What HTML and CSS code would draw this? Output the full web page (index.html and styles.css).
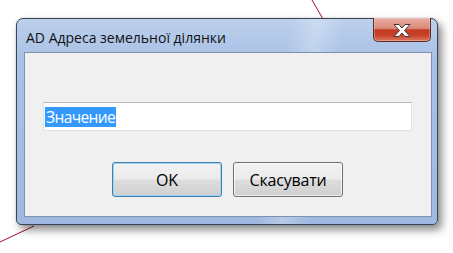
FILE: index.html
```html
<!DOCTYPE html>
<html>
<head>
<meta charset="utf-8">
<link rel="stylesheet" href="styles.css">
</head>
<body>
<svg class="lines" width="453" height="253" viewBox="0 0 453 253">
  <line x1="312" y1="0" x2="323" y2="19" stroke="#a3122e" stroke-width="1"/>
  <line x1="0" y1="242" x2="34" y2="226" stroke="#a3122e" stroke-width="1"/>
</svg>
<div class="window">
  <div class="titlebar">
    <span class="title">AD Адреса земельної ділянки</span>
    <div class="close">
      <svg width="22" height="15" viewBox="0 0 22 15">
        <path d="M3 1.5 L8 1.5 L11 5 L14 1.5 L19 1.5 L13.5 7.5 L19 13.5 L14 13.5 L11 10 L8 13.5 L3 13.5 L8.5 7.5 Z" fill="#ffffff" stroke="#4a3330" stroke-width="1" stroke-linejoin="round"/>
      </svg>
    </div>
  </div>
  <div class="client">
    <div class="textbox"><span class="sel">Значение</span></div>
    <div class="buttons">
      <div class="btn default">OK</div>
      <div class="btn">Скасувати</div>
    </div>
  </div>
</div>
</body>
</html>
```
FILE: styles.css
```css
html, body {
  margin: 0;
  padding: 0;
  background: #ffffff;
  width: 453px;
  height: 253px;
  overflow: hidden;
  font-family: "Open Sans", "Noto Sans", "Liberation Sans", sans-serif;
}
body {
  position: relative;
}
.lines {
  position: absolute;
  left: 0;
  top: 0;
}
.window {
  position: relative;
  margin: 18px 0 0 16px;
  width: 422px;
  height: 207px;
  box-sizing: border-box;
  border: 1px solid #384656;
  border-radius: 7px 7px 5px 5px;
  background:
    linear-gradient(100deg, rgba(255,255,255,0) 60%, rgba(255,255,255,0.25) 66%, rgba(255,255,255,0) 72%),
    linear-gradient(180deg, #bcd0ec 0%, #a9c1e6 20%, #a5bde3 60%, #9fb8e0 100%);
  box-shadow: 4px 5px 9px rgba(0,0,0,0.45), 0 0 2px rgba(0,0,0,0.2);
  padding: 0 5px 7px 7px;
  display: flex;
  flex-direction: column;
}
.titlebar {
  height: 33px;
  display: flex;
  align-items: flex-start;
}
.title {
  margin-top: 9px;
  padding-left: 2px;
  font-size: 14px;
  color: #111111;
  letter-spacing: 0;
}
.close {
  margin-left: auto;
  margin-top: -1px;
  margin-right: 1px;
  width: 58px;
  height: 24px;
  box-sizing: border-box;
  border: 1px solid #5b2d2a;
  border-top: none;
  border-radius: 0 0 5px 5px;
  background: linear-gradient(180deg, #e8aba0 0%, #da8a7a 45%, #c23a22 52%, #c7412a 75%, #dc7a5f 100%);
  display: flex;
  align-items: center;
  justify-content: center;
  box-shadow: inset 0 0 0 1px rgba(255,255,255,0.25);
}
.close svg {
  margin-top: 1px;
}
.client {
  flex: 1;
  background: #f0f0f0;
  border: 1px solid #7f93ae;
  display: flex;
  flex-direction: column;
  padding: 49px 0 0 18px;
}
.textbox {
  width: 369px;
  height: 29px;
  box-sizing: border-box;
  background: #ffffff;
  border: 1px solid #dbe2ea;
  border-top-color: #b6bcc6;
  padding: 4px 0 0 1px;
  display: flex;
  align-items: flex-start;
}
.sel {
  background: #3399ff;
  color: #ffffff;
  font-size: 15.5px;
  line-height: 20px;
  height: 20px;
  padding: 0 1px;
  letter-spacing: -0.6px;
}
.buttons {
  display: flex;
  gap: 11px;
  margin-top: 31px;
  margin-left: 69px;
}
.btn {
  width: 110px;
  height: 35px;
  box-sizing: border-box;
  border: 1px solid #707070;
  border-radius: 3px;
  background: linear-gradient(180deg, #f2f2f2 0%, #ebebeb 48%, #dddddd 52%, #cfcfcf 100%);
  box-shadow: inset 0 0 0 1px rgba(255,255,255,0.7);
  display: flex;
  align-items: center;
  justify-content: center;
  font-size: 16px;
  color: #000000;
  letter-spacing: -0.2px;
}
.btn.default {
  border-color: #3c7fb1;
  box-shadow: inset 0 0 0 1px #9fd5f3;
}
```
